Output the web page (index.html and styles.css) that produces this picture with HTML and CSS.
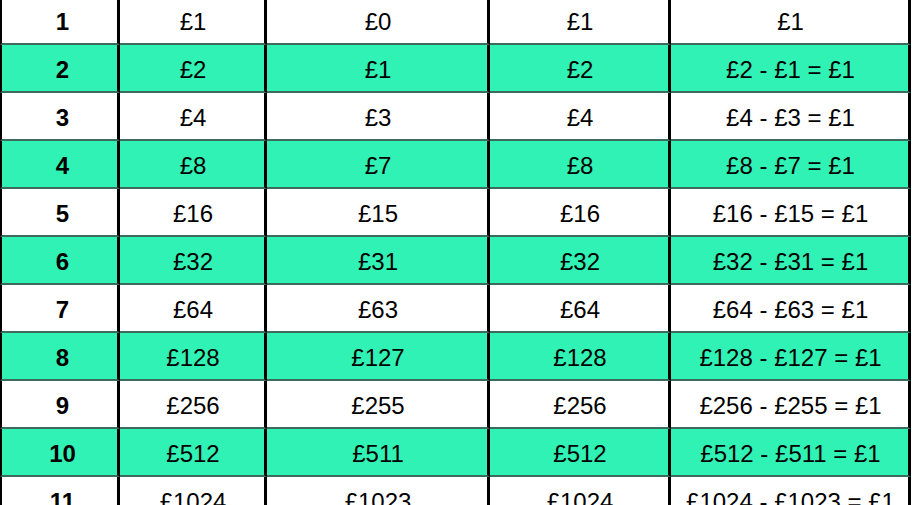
FILE: index.html
```html
<!DOCTYPE html>
<html>
<head>
<meta charset="utf-8">
<link rel="stylesheet" href="styles.css">
</head>
<body>
<table class="grid">
  <colgroup>
    <col class="c1"><col class="c2"><col class="c3"><col class="c4"><col class="c5">
  </colgroup>
  <tbody>
    <tr><th>1</th><td>£1</td><td>£0</td><td>£1</td><td>£1</td></tr>
    <tr class="hl"><th>2</th><td>£2</td><td>£1</td><td>£2</td><td>£2 - £1 = £1</td></tr>
    <tr><th>3</th><td>£4</td><td>£3</td><td>£4</td><td>£4 - £3 = £1</td></tr>
    <tr class="hl"><th>4</th><td>£8</td><td>£7</td><td>£8</td><td>£8 - £7 = £1</td></tr>
    <tr><th>5</th><td>£16</td><td>£15</td><td>£16</td><td>£16 - £15 = £1</td></tr>
    <tr class="hl"><th>6</th><td>£32</td><td>£31</td><td>£32</td><td>£32 - £31 = £1</td></tr>
    <tr><th>7</th><td>£64</td><td>£63</td><td>£64</td><td>£64 - £63 = £1</td></tr>
    <tr class="hl"><th>8</th><td>£128</td><td>£127</td><td>£128</td><td>£128 - £127 = £1</td></tr>
    <tr><th>9</th><td>£256</td><td>£255</td><td>£256</td><td>£256 - £255 = £1</td></tr>
    <tr class="hl"><th>10</th><td>£512</td><td>£511</td><td>£512</td><td>£512 - £511 = £1</td></tr>
    <tr><th>11</th><td>£1024</td><td>£1023</td><td>£1024</td><td>£1024 - £1023 = £1</td></tr>
  </tbody>
</table>
</body>
</html>
```
FILE: styles.css
```css
html, body {
  margin: 0;
  padding: 0;
  background: #ffffff;
  overflow: hidden;
}
.grid {
  margin-top: -3px;
  border-collapse: separate;
  border-spacing: 0;
  table-layout: fixed;
  width: 911px;
  font-family: "Liberation Sans", Arial, sans-serif;
  font-size: 24px;
  color: #000;
}
.c1 { width: 120px; }
.c2 { width: 147px; }
.c3 { width: 223px; }
.c4 { width: 181px; }
.c5 { width: 240px; }
.grid th,
.grid td {
  box-sizing: content-box;
  padding: 4px 0 0 2px;
  height: 42px;
  line-height: 28px;
  text-align: center;
  vertical-align: middle;
  border-right: 3px solid #000;
  border-bottom: 2px solid #3c6b5c;
  white-space: nowrap;
}
.grid th {
  font-weight: bold;
  padding-left: 6px;
  border-left: 2px solid #000;
}
.grid tr.hl th,
.grid tr.hl td {
  background: #30f2b4;
}
```
